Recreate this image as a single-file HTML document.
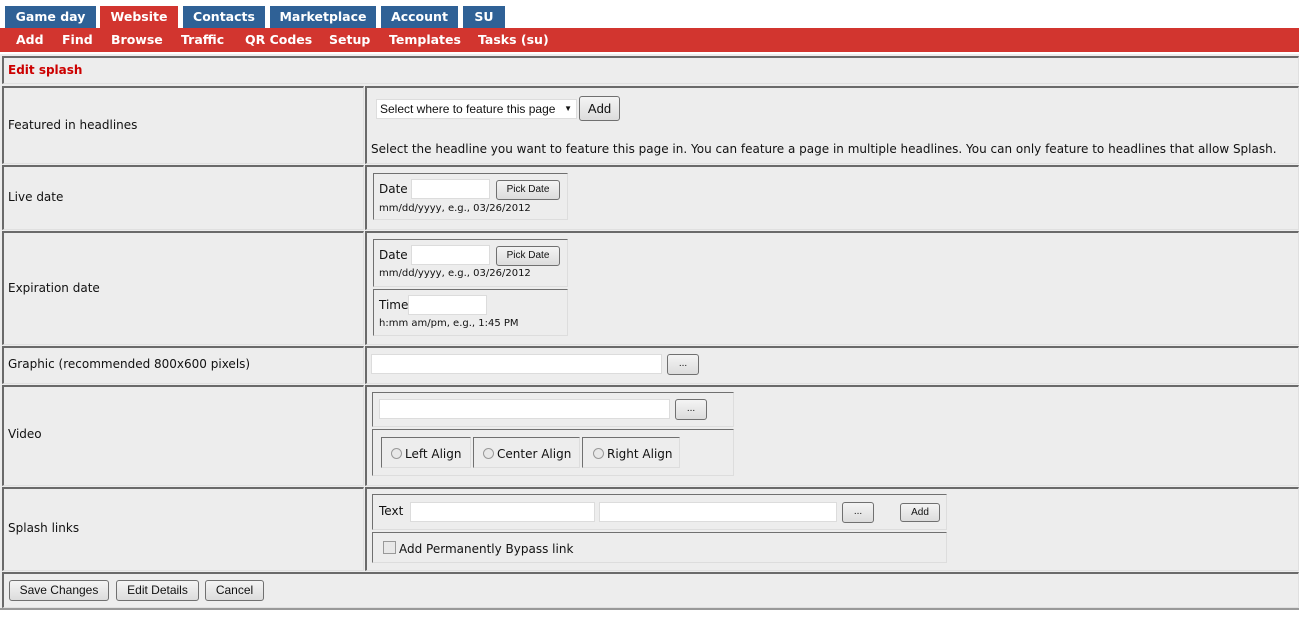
<!DOCTYPE html>
<html><head><style>
*{box-sizing:border-box}
body{margin:0;width:1299px;height:617px;background:#fff;font-family:"DejaVu Sans",Verdana,sans-serif;font-size:12px;color:#111;position:relative;overflow:hidden}
.a{position:absolute}
.tab{position:absolute;top:6px;height:22px;background:#2f6196;color:#fff;font-weight:bold;font-size:12.5px;line-height:21px;text-align:center}
.red{position:absolute;left:0;top:28px;width:1299px;height:24px;background:#d2352f}
.sub{position:absolute;top:32px;color:#fff;font-weight:bold;font-size:12.5px}
.cell{position:absolute;background:#ededed;border-top:2px solid #6a6a6a;border-left:2px solid #6a6a6a;border-bottom:1px solid #e0e0e0;border-right:1px solid #e0e0e0}
.lbl{position:absolute;left:8px;font-size:12px}
.box{position:absolute;border-top:1px solid #707070;border-left:1px solid #707070;border-right:1px solid #ddd;border-bottom:1px solid #ddd}
.inp{position:absolute;background:#fff;border:1px solid #dcdcdc;height:20px}
.btn{position:absolute;border:1px solid #707070;border-radius:3px;background:linear-gradient(#f4f4f4,#dcdcdc);font-family:"Liberation Sans",Arial,sans-serif;text-align:center;color:#111}
.sm{font-size:10px}
.radio{display:inline-block;width:11px;height:11px;border:1px solid #999;border-radius:50%;background:#e8e8e8;vertical-align:-1px;margin-right:3px}
</style></head><body>
<div class="tab" style="left:5px;width:91px">Game day</div>
<div class="tab" style="left:100px;width:78px;background:#d2352f">Website</div>
<div class="tab" style="left:183px;width:82px">Contacts</div>
<div class="tab" style="left:270px;width:106px">Marketplace</div>
<div class="tab" style="left:381px;width:77px">Account</div>
<div class="tab" style="left:463px;width:42px">SU</div>
<div class="red"></div>
<div class="sub" style="left:16px">Add</div>
<div class="sub" style="left:62px">Find</div>
<div class="sub" style="left:111px">Browse</div>
<div class="sub" style="left:181px">Traffic</div>
<div class="sub" style="left:245px">QR Codes</div>
<div class="sub" style="left:329px">Setup</div>
<div class="sub" style="left:389px">Templates</div>
<div class="sub" style="left:478px">Tasks (su)</div>
<div class="a" style="left:0;top:52px;width:1299px;height:558px;background:#ededed;border-top:2px solid #fff;border-bottom:2px solid #999"></div>
<div class="cell" style="left:2px;top:56px;width:1297px;height:28px"></div>
<div class="a" style="left:8px;top:63px;color:#cc0000;font-weight:bold;font-size:12px">Edit splash</div>

<div class="cell" style="left:2px;top:86px;width:362px;height:78px"></div><div class="cell" style="left:365px;top:86px;width:934px;height:78px"></div>
<div class="lbl" style="top:118px">Featured in headlines</div>
<div class="a" style="left:376px;top:99px;width:201px;height:20px;background:#fff;border:1px solid #ddd;font-family:'Liberation Sans',Arial;font-size:12px;line-height:18px;padding-left:3px">Select where to feature this page <span style="position:absolute;right:4px;font-size:8px">▼</span></div>
<div class="btn" style="left:579px;top:96px;width:41px;height:25px;font-size:13px;line-height:23px">Add</div>
<div class="a" style="left:371px;top:142px;font-size:12px">Select the headline you want to feature this page in. You can feature a page in multiple headlines. You can only feature to headlines that allow Splash.</div>

<div class="cell" style="left:2px;top:165px;width:362px;height:65px"></div><div class="cell" style="left:365px;top:165px;width:934px;height:65px"></div>
<div class="lbl" style="top:190px">Live date</div>
<div class="box" style="left:373px;top:173px;width:195px;height:47px"></div>
<div class="a" style="left:379px;top:182px">Date</div>
<div class="inp" style="left:411px;top:179px;width:79px"></div>
<div class="btn sm" style="left:496px;top:180px;width:64px;height:20px;line-height:18px">Pick Date</div>
<div class="a sm" style="left:379px;top:203px">mm/dd/yyyy, e.g., 03/26/2012</div>

<div class="cell" style="left:2px;top:231px;width:362px;height:114px"></div><div class="cell" style="left:365px;top:231px;width:934px;height:114px"></div>
<div class="lbl" style="top:281px">Expiration date</div>
<div class="box" style="left:373px;top:239px;width:195px;height:48px"></div>
<div class="a" style="left:379px;top:248px">Date</div>
<div class="inp" style="left:411px;top:245px;width:79px"></div>
<div class="btn sm" style="left:496px;top:246px;width:64px;height:20px;line-height:18px">Pick Date</div>
<div class="a sm" style="left:379px;top:268px">mm/dd/yyyy, e.g., 03/26/2012</div>
<div class="box" style="left:373px;top:289px;width:195px;height:47px"></div>
<div class="a" style="left:379px;top:298px">Time</div>
<div class="inp" style="left:408px;top:295px;width:79px"></div>
<div class="a sm" style="left:379px;top:318px">h:mm am/pm, e.g., 1:45 PM</div>

<div class="cell" style="left:2px;top:346px;width:362px;height:38px"></div><div class="cell" style="left:365px;top:346px;width:934px;height:38px"></div>
<div class="lbl" style="top:357px">Graphic (recommended 800x600 pixels)</div>
<div class="inp" style="left:371px;top:354px;width:291px"></div>
<div class="btn sm" style="left:667px;top:354px;width:32px;height:21px;line-height:18px">...</div>

<div class="cell" style="left:2px;top:385px;width:362px;height:101px"></div><div class="cell" style="left:365px;top:385px;width:934px;height:101px"></div>
<div class="lbl" style="top:427px">Video</div>
<div class="box" style="left:372px;top:392px;width:362px;height:35px"></div>
<div class="inp" style="left:379px;top:399px;width:291px"></div>
<div class="btn sm" style="left:675px;top:399px;width:32px;height:21px;line-height:18px">...</div>
<div class="box" style="left:372px;top:429px;width:362px;height:47px"></div>
<div class="box" style="left:381px;top:437px;width:90px;height:31px"></div>
<div class="box" style="left:473px;top:437px;width:107px;height:31px"></div>
<div class="box" style="left:582px;top:437px;width:98px;height:31px"></div>
<div class="a" style="left:391px;top:447px"><span class="radio"></span>Left Align</div>
<div class="a" style="left:483px;top:447px"><span class="radio"></span>Center Align</div>
<div class="a" style="left:593px;top:447px"><span class="radio"></span>Right Align</div>

<div class="cell" style="left:2px;top:487px;width:362px;height:84px"></div><div class="cell" style="left:365px;top:487px;width:934px;height:84px"></div>
<div class="lbl" style="top:521px">Splash links</div>
<div class="box" style="left:372px;top:494px;width:575px;height:36px"></div>
<div class="a" style="left:379px;top:504px">Text</div>
<div class="inp" style="left:410px;top:502px;width:185px"></div>
<div class="inp" style="left:599px;top:502px;width:238px"></div>
<div class="btn sm" style="left:842px;top:502px;width:32px;height:21px;line-height:18px">...</div>
<div class="btn sm" style="left:900px;top:503px;width:40px;height:19px;line-height:17px">Add</div>
<div class="box" style="left:372px;top:532px;width:575px;height:31px"></div>
<div class="a" style="left:383px;top:541px;width:13px;height:13px;border:1px solid #999;background:#e8e8e8"></div>
<div class="a" style="left:399px;top:542px">Add Permanently Bypass link</div>

<div class="cell" style="left:2px;top:572px;width:1297px;height:36px"></div>
<div class="btn" style="left:9px;top:580px;width:100px;height:21px;font-size:12px;line-height:19px">Save Changes</div>
<div class="btn" style="left:116px;top:580px;width:83px;height:21px;font-size:12px;line-height:19px">Edit Details</div>
<div class="btn" style="left:205px;top:580px;width:59px;height:21px;font-size:12px;line-height:19px">Cancel</div>
</body></html>
